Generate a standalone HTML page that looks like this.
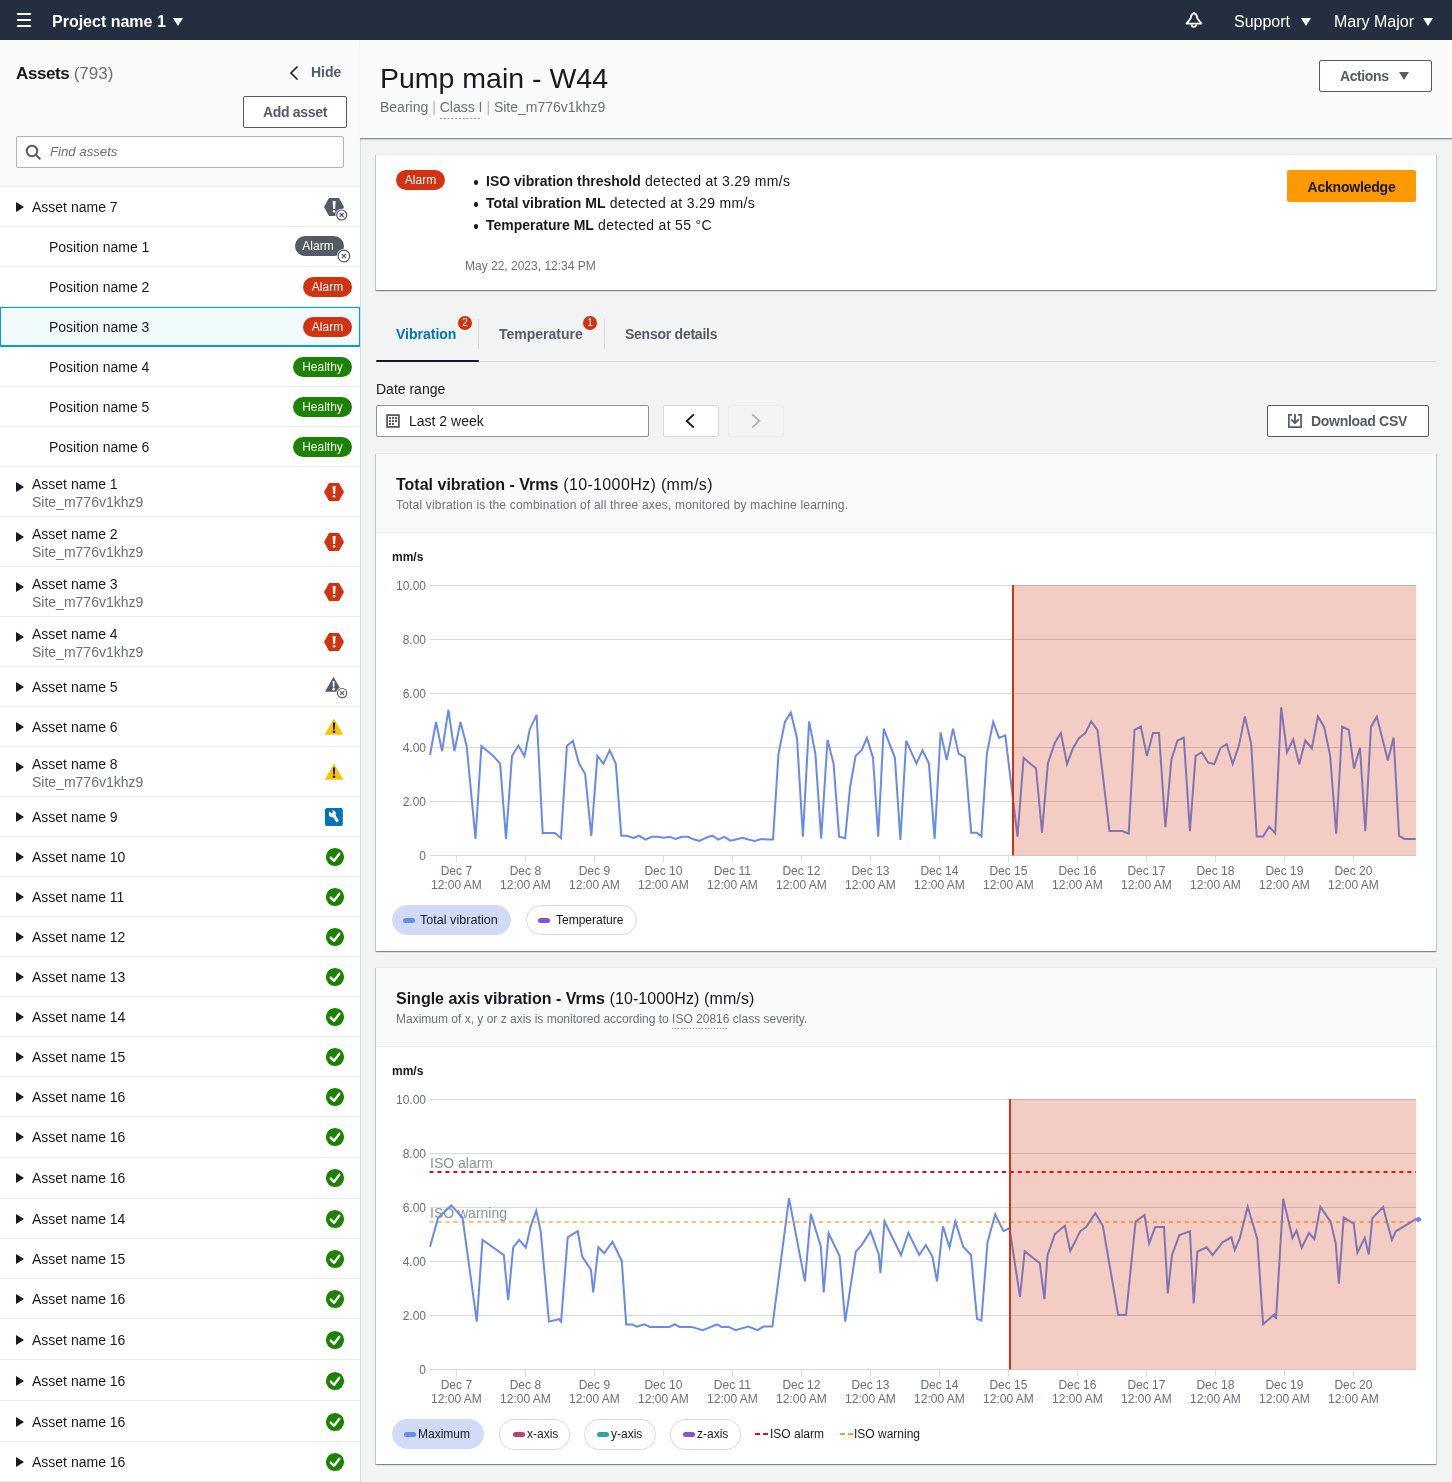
<!DOCTYPE html>
<html><head><meta charset="utf-8"><title>Pump main - W44</title>
<style>
*{box-sizing:border-box}
html,body{margin:0;padding:0}
body{-webkit-font-smoothing:antialiased;will-change:transform;width:1452px;height:1482px;overflow:hidden;position:relative;background:#f2f3f3;font-family:'Liberation Sans',sans-serif;color:#16191f}
.a{position:absolute}
.t{position:absolute;white-space:nowrap;line-height:1}
.nav{left:0;top:0;width:1452px;height:40px;background:#232f3e}
.row{position:absolute;left:0;width:360px;background:#fff;border-bottom:1px solid #eaeded}
.rn{position:absolute;font-size:14px;white-space:nowrap;line-height:1;color:#16191f}
.rs{position:absolute;font-size:14px;white-space:nowrap;line-height:1;color:#687078}
.tri{position:absolute;width:0;height:0;border-top:5px solid transparent;border-bottom:5px solid transparent;border-left:8px solid #16191f}
.badge{position:absolute;height:20px;border-radius:10px;color:#fff;font-size:12px;line-height:20px;text-align:center;white-space:nowrap}
.btn{position:absolute;border:1px solid #545b64;border-radius:2px;background:#fff;color:#545b64;font-weight:bold;font-size:14px;white-space:nowrap}
.card{position:absolute;background:#fff;box-shadow:0 1px 1px 0 rgba(0,28,36,.3),1px 1px 1px 0 rgba(0,28,36,.15),-1px 1px 1px 0 rgba(0,28,36,.15);border-top:1px solid #eaeded}
.gl{position:absolute;white-space:nowrap;line-height:1;font-size:12px;color:#687078}
.pill{position:absolute;height:30px;border-radius:15px;border:1px solid #d5dbdb;background:#fff;font-size:12px;color:#16191f;white-space:nowrap}
.pill.on{background:#d1dbf7;border-color:#d1dbf7}
.sw{position:absolute;height:5px;width:12px;border-radius:3px}
</style></head>
<body>
<div class="a nav"></div>
<div class="a" style="left:17px;top:13.1px;width:14px;height:1.8px;background:#fff"></div>
<div class="a" style="left:17px;top:19.3px;width:14px;height:1.8px;background:#fff"></div>
<div class="a" style="left:17px;top:25.2px;width:14px;height:1.8px;background:#fff"></div>
<div class="t" style="left:52px;top:13.5px;font-size:16px;font-weight:bold;color:#fff">Project name 1</div>
<div class="a" style="left:173px;top:18px;width:0;height:0;border-left:5.0px solid transparent;border-right:5.0px solid transparent;border-top:8px solid #fff"></div>
<svg class="a" style="left:1184px;top:11px" width="20" height="20" viewBox="0 0 20 20"><path d="M2.6 12.6h14.8l-3.6-4.6c-0.7-0.9-0.8-2.2-1.1-3.3a2.8 2.8 0 0 0-5.4 0c-0.3 1.1-0.4 2.4-1.1 3.3z" fill="none" stroke="#fff" stroke-width="1.9" stroke-linejoin="round"/><path d="M10 0.9v1.4" stroke="#fff" stroke-width="1.8"/><path d="M7.6 13.4a2.4 2.4 0 0 0 4.8 0" fill="none" stroke="#fff" stroke-width="1.8"/></svg>
<div class="t" style="left:1234px;top:13.5px;font-size:16px;color:#fff">Support</div>
<div class="a" style="left:1301px;top:17.5px;width:0;height:0;border-left:5.0px solid transparent;border-right:5.0px solid transparent;border-top:8px solid #fff"></div>
<div class="t" style="left:1334px;top:13.5px;font-size:16px;color:#fff">Mary Major</div>
<div class="a" style="left:1423px;top:17.5px;width:0;height:0;border-left:5.0px solid transparent;border-right:5.0px solid transparent;border-top:8px solid #fff"></div>
<div class="a" style="left:0;top:40px;width:361px;height:1442px;background:#fafafa;border-right:1px solid #d5dbdb"></div>
<div class="t" style="left:16px;top:64.5px;font-size:17px;font-weight:bold;letter-spacing:-0.4px">Assets <span style="font-weight:normal;color:#687078;letter-spacing:0">(793)</span></div>
<svg class="a" style="left:288px;top:65px" width="12" height="16" viewBox="0 0 12 16"><path d="M9.5 1.5 3 8l6.5 6.5" fill="none" stroke="#16191f" stroke-width="1.6"/></svg>
<div class="t" style="left:311px;top:65px;font-size:14px;font-weight:bold;color:#545b64">Hide</div>
<div class="btn" style="left:243px;top:96px;width:104px;height:32px;line-height:30px;text-align:center;letter-spacing:-0.3px">Add asset</div>
<div class="a" style="left:16px;top:136px;width:328px;height:32px;background:#fff;border:1px solid #aab7b8;border-radius:2px"></div>
<svg class="a" style="left:25px;top:144px" width="17" height="17" viewBox="0 0 17 17"><circle cx="7" cy="7" r="5.2" fill="none" stroke="#545b64" stroke-width="2"/><path d="M10.8 10.8l4.5 4.5" stroke="#545b64" stroke-width="2"/></svg>
<div class="t" style="left:50px;top:145px;font-size:13.2px;font-style:italic;color:#687078">Find assets</div>
<div class="a" style="left:0;top:186px;width:360px;height:2px;background:#eaeded"></div>
<div class="row" style="top:187px;height:39.5px"></div>
<div class="tri" style="left:16px;top:201.75px"></div>
<div class="rn" style="left:32px;top:199.75px">Asset name 7</div>
<svg class="a" style="left:300px;top:186.75px;overflow:visible" width="60" height="40" viewBox="300 186.75 60 40"><path d="M329 197.75h10l5 9-5 9h-10l-5-9z" fill="#545b64"/><path d="M332.6 200.75h3l-0.5 8h-2z" fill="#fff"/><circle cx="334.1" cy="211.05" r="1.3" fill="#fff"/><circle cx="341.7" cy="214.75" r="6.3" fill="#fff"/><circle cx="341.7" cy="214.75" r="5" fill="#fff" stroke="#545b64" stroke-width="1.2"/><path d="M339.7 212.75l4 4M343.7 212.75l-4 4" stroke="#545b64" stroke-width="1.2"/></svg>
<div class="row" style="top:226.5px;height:40.5px"></div>
<div class="rn" style="left:49px;top:239.75px">Position name 1</div>
<div class="badge" style="left:295px;top:235.75px;width:49px;background:#545b64;padding-right:3px">Alarm</div>
<svg class="a" style="left:334px;top:245.75px;overflow:visible" width="20" height="20" viewBox="334 245.75 20 20"><circle cx="343.9" cy="255.75" r="7.1" fill="#fff"/><circle cx="343.9" cy="255.75" r="5.8" fill="#fff" stroke="#545b64" stroke-width="1.2"/><path d="M341.9 253.75l4 4M345.9 253.75l-4 4" stroke="#545b64" stroke-width="1.2"/></svg>
<div class="row" style="top:267px;height:40px"></div>
<div class="rn" style="left:49px;top:280.0px">Position name 2</div>
<div class="badge" style="left:303px;top:277.0px;width:49px;background:#d13212">Alarm</div>
<div class="row" style="top:307px;height:39.5px"></div>
<div class="a" style="left:0;top:307px;width:360px;height:40px;background:#f1faff;border:1px solid #00a1c9;border-bottom-width:2px"></div>
<div class="rn" style="left:49px;top:319.75px">Position name 3</div>
<div class="badge" style="left:303px;top:316.75px;width:49px;background:#d13212">Alarm</div>
<div class="row" style="top:346.5px;height:40.5px"></div>
<div class="rn" style="left:49px;top:359.75px">Position name 4</div>
<div class="badge" style="left:293px;top:356.75px;width:59px;background:#1d8102">Healthy</div>
<div class="row" style="top:387px;height:40px"></div>
<div class="rn" style="left:49px;top:400.0px">Position name 5</div>
<div class="badge" style="left:293px;top:397.0px;width:59px;background:#1d8102">Healthy</div>
<div class="row" style="top:427px;height:40px"></div>
<div class="rn" style="left:49px;top:440.0px">Position name 6</div>
<div class="badge" style="left:293px;top:437.0px;width:59px;background:#1d8102">Healthy</div>
<div class="row" style="top:467px;height:50px"></div>
<div class="tri" style="left:16px;top:482px"></div>
<div class="rn" style="left:32px;top:477px">Asset name 1</div>
<div class="rs" style="left:32px;top:495px">Site_m776v1khz9</div>
<svg class="a" style="left:300px;top:472.0px;overflow:visible" width="60" height="40" viewBox="300 472.0 60 40"><path d="M329 483.0h10l5 9-5 9h-10l-5-9z" fill="#d13212"/><path d="M332.6 486.0h3l-0.5 8h-2z" fill="#fff"/><circle cx="334.1" cy="496.3" r="1.3" fill="#fff"/></svg>
<div class="row" style="top:517px;height:50px"></div>
<div class="tri" style="left:16px;top:532px"></div>
<div class="rn" style="left:32px;top:527px">Asset name 2</div>
<div class="rs" style="left:32px;top:545px">Site_m776v1khz9</div>
<svg class="a" style="left:300px;top:522.0px;overflow:visible" width="60" height="40" viewBox="300 522.0 60 40"><path d="M329 533.0h10l5 9-5 9h-10l-5-9z" fill="#d13212"/><path d="M332.6 536.0h3l-0.5 8h-2z" fill="#fff"/><circle cx="334.1" cy="546.3" r="1.3" fill="#fff"/></svg>
<div class="row" style="top:567px;height:50px"></div>
<div class="tri" style="left:16px;top:582px"></div>
<div class="rn" style="left:32px;top:577px">Asset name 3</div>
<div class="rs" style="left:32px;top:595px">Site_m776v1khz9</div>
<svg class="a" style="left:300px;top:572.0px;overflow:visible" width="60" height="40" viewBox="300 572.0 60 40"><path d="M329 583.0h10l5 9-5 9h-10l-5-9z" fill="#d13212"/><path d="M332.6 586.0h3l-0.5 8h-2z" fill="#fff"/><circle cx="334.1" cy="596.3" r="1.3" fill="#fff"/></svg>
<div class="row" style="top:617px;height:50px"></div>
<div class="tri" style="left:16px;top:632px"></div>
<div class="rn" style="left:32px;top:627px">Asset name 4</div>
<div class="rs" style="left:32px;top:645px">Site_m776v1khz9</div>
<svg class="a" style="left:300px;top:622.0px;overflow:visible" width="60" height="40" viewBox="300 622.0 60 40"><path d="M329 633.0h10l5 9-5 9h-10l-5-9z" fill="#d13212"/><path d="M332.6 636.0h3l-0.5 8h-2z" fill="#fff"/><circle cx="334.1" cy="646.3" r="1.3" fill="#fff"/></svg>
<div class="row" style="top:667px;height:40px"></div>
<div class="tri" style="left:16px;top:682.0px"></div>
<div class="rn" style="left:32px;top:680.0px">Asset name 5</div>
<svg class="a" style="left:300px;top:667.0px;overflow:visible" width="60" height="40" viewBox="300 667.0 60 40"><path d="M333.5 676.8l8.5 15h-17z" fill="#545b64"/><path d="M332.6 681.0h2l-0.3 6.5h-1.4z" fill="#fff"/><circle cx="333.6" cy="689.3" r="1.3" fill="#fff"/><circle cx="342.1" cy="693.1" r="5.8999999999999995" fill="#fff"/><circle cx="342.1" cy="693.1" r="4.6" fill="#fff" stroke="#545b64" stroke-width="1.2"/><path d="M340.1 691.1l4 4M344.1 691.1l-4 4" stroke="#545b64" stroke-width="1.2"/></svg>
<div class="row" style="top:707px;height:40px"></div>
<div class="tri" style="left:16px;top:722.0px"></div>
<div class="rn" style="left:32px;top:720.0px">Asset name 6</div>
<svg class="a" style="left:300px;top:707.0px;overflow:visible" width="60" height="40" viewBox="300 707.0 60 40"><path d="M334 718.5l9.3 16.2h-18.6z" fill="#fac300"/><path d="M332.9 722.5h2.2l-0.3 7h-1.6z" fill="#0f1b2a"/><circle cx="334" cy="731.8" r="1.3" fill="#0f1b2a"/></svg>
<div class="row" style="top:747px;height:50px"></div>
<div class="tri" style="left:16px;top:762px"></div>
<div class="rn" style="left:32px;top:757px">Asset name 8</div>
<div class="rs" style="left:32px;top:775px">Site_m776v1khz9</div>
<svg class="a" style="left:300px;top:752.0px;overflow:visible" width="60" height="40" viewBox="300 752.0 60 40"><path d="M334 763.5l9.3 16.2h-18.6z" fill="#fac300"/><path d="M332.9 767.5h2.2l-0.3 7h-1.6z" fill="#0f1b2a"/><circle cx="334" cy="776.8" r="1.3" fill="#0f1b2a"/></svg>
<div class="row" style="top:797px;height:40px"></div>
<div class="tri" style="left:16px;top:812.0px"></div>
<div class="rn" style="left:32px;top:810.0px">Asset name 9</div>
<svg class="a" style="left:300px;top:797.0px;overflow:visible" width="60" height="40" viewBox="300 797.0 60 40"><rect x="325" y="808.1" width="17.8" height="17.8" rx="2" fill="#0073bb"/><circle cx="332.3" cy="813.8" r="3.5" fill="#fff"/><path d="M333.8 815.6L337.9 821.6" stroke="#fff" stroke-width="3" stroke-linecap="butt"/><rect x="329.6" y="808.8" width="2.6" height="4.4" transform="rotate(-42 330.9 811.0)" fill="#0073bb"/></svg>
<div class="row" style="top:837px;height:40px"></div>
<div class="tri" style="left:16px;top:852.0px"></div>
<div class="rn" style="left:32px;top:850.0px">Asset name 10</div>
<svg class="a" style="left:300px;top:837.0px;overflow:visible" width="60" height="40" viewBox="300 837.0 60 40"><circle cx="335" cy="857.0" r="9.1" fill="#1d8102"/><path d="M330.8 857.6l3.3 3.2 5.2-7" fill="none" stroke="#fff" stroke-width="2.4" stroke-linecap="round" stroke-linejoin="round"/></svg>
<div class="row" style="top:877px;height:40px"></div>
<div class="tri" style="left:16px;top:892.0px"></div>
<div class="rn" style="left:32px;top:890.0px">Asset name 11</div>
<svg class="a" style="left:300px;top:877.0px;overflow:visible" width="60" height="40" viewBox="300 877.0 60 40"><circle cx="335" cy="897.0" r="9.1" fill="#1d8102"/><path d="M330.8 897.6l3.3 3.2 5.2-7" fill="none" stroke="#fff" stroke-width="2.4" stroke-linecap="round" stroke-linejoin="round"/></svg>
<div class="row" style="top:917px;height:40px"></div>
<div class="tri" style="left:16px;top:932.0px"></div>
<div class="rn" style="left:32px;top:930.0px">Asset name 12</div>
<svg class="a" style="left:300px;top:917.0px;overflow:visible" width="60" height="40" viewBox="300 917.0 60 40"><circle cx="335" cy="937.0" r="9.1" fill="#1d8102"/><path d="M330.8 937.6l3.3 3.2 5.2-7" fill="none" stroke="#fff" stroke-width="2.4" stroke-linecap="round" stroke-linejoin="round"/></svg>
<div class="row" style="top:957px;height:40px"></div>
<div class="tri" style="left:16px;top:972.0px"></div>
<div class="rn" style="left:32px;top:970.0px">Asset name 13</div>
<svg class="a" style="left:300px;top:957.0px;overflow:visible" width="60" height="40" viewBox="300 957.0 60 40"><circle cx="335" cy="977.0" r="9.1" fill="#1d8102"/><path d="M330.8 977.6l3.3 3.2 5.2-7" fill="none" stroke="#fff" stroke-width="2.4" stroke-linecap="round" stroke-linejoin="round"/></svg>
<div class="row" style="top:997px;height:40px"></div>
<div class="tri" style="left:16px;top:1012.0px"></div>
<div class="rn" style="left:32px;top:1010.0px">Asset name 14</div>
<svg class="a" style="left:300px;top:997.0px;overflow:visible" width="60" height="40" viewBox="300 997.0 60 40"><circle cx="335" cy="1017.0" r="9.1" fill="#1d8102"/><path d="M330.8 1017.6l3.3 3.2 5.2-7" fill="none" stroke="#fff" stroke-width="2.4" stroke-linecap="round" stroke-linejoin="round"/></svg>
<div class="row" style="top:1037px;height:40px"></div>
<div class="tri" style="left:16px;top:1052.0px"></div>
<div class="rn" style="left:32px;top:1050.0px">Asset name 15</div>
<svg class="a" style="left:300px;top:1037.0px;overflow:visible" width="60" height="40" viewBox="300 1037.0 60 40"><circle cx="335" cy="1057.0" r="9.1" fill="#1d8102"/><path d="M330.8 1057.6l3.3 3.2 5.2-7" fill="none" stroke="#fff" stroke-width="2.4" stroke-linecap="round" stroke-linejoin="round"/></svg>
<div class="row" style="top:1077px;height:40px"></div>
<div class="tri" style="left:16px;top:1092.0px"></div>
<div class="rn" style="left:32px;top:1090.0px">Asset name 16</div>
<svg class="a" style="left:300px;top:1077.0px;overflow:visible" width="60" height="40" viewBox="300 1077.0 60 40"><circle cx="335" cy="1097.0" r="9.1" fill="#1d8102"/><path d="M330.8 1097.6l3.3 3.2 5.2-7" fill="none" stroke="#fff" stroke-width="2.4" stroke-linecap="round" stroke-linejoin="round"/></svg>
<div class="row" style="top:1117px;height:40.5px"></div>
<div class="tri" style="left:16px;top:1132.25px"></div>
<div class="rn" style="left:32px;top:1130.25px">Asset name 16</div>
<svg class="a" style="left:300px;top:1117.25px;overflow:visible" width="60" height="40" viewBox="300 1117.25 60 40"><circle cx="335" cy="1137.25" r="9.1" fill="#1d8102"/><path d="M330.8 1137.85l3.3 3.2 5.2-7" fill="none" stroke="#fff" stroke-width="2.4" stroke-linecap="round" stroke-linejoin="round"/></svg>
<div class="row" style="top:1157.5px;height:41.0px"></div>
<div class="tri" style="left:16px;top:1173.0px"></div>
<div class="rn" style="left:32px;top:1171.0px">Asset name 16</div>
<svg class="a" style="left:300px;top:1158.0px;overflow:visible" width="60" height="40" viewBox="300 1158.0 60 40"><circle cx="335" cy="1178.0" r="9.1" fill="#1d8102"/><path d="M330.8 1178.6l3.3 3.2 5.2-7" fill="none" stroke="#fff" stroke-width="2.4" stroke-linecap="round" stroke-linejoin="round"/></svg>
<div class="row" style="top:1198.5px;height:40.5px"></div>
<div class="tri" style="left:16px;top:1213.75px"></div>
<div class="rn" style="left:32px;top:1211.75px">Asset name 14</div>
<svg class="a" style="left:300px;top:1198.75px;overflow:visible" width="60" height="40" viewBox="300 1198.75 60 40"><circle cx="335" cy="1218.75" r="9.1" fill="#1d8102"/><path d="M330.8 1219.35l3.3 3.2 5.2-7" fill="none" stroke="#fff" stroke-width="2.4" stroke-linecap="round" stroke-linejoin="round"/></svg>
<div class="row" style="top:1239px;height:40px"></div>
<div class="tri" style="left:16px;top:1254.0px"></div>
<div class="rn" style="left:32px;top:1252.0px">Asset name 15</div>
<svg class="a" style="left:300px;top:1239.0px;overflow:visible" width="60" height="40" viewBox="300 1239.0 60 40"><circle cx="335" cy="1259.0" r="9.1" fill="#1d8102"/><path d="M330.8 1259.6l3.3 3.2 5.2-7" fill="none" stroke="#fff" stroke-width="2.4" stroke-linecap="round" stroke-linejoin="round"/></svg>
<div class="row" style="top:1279px;height:40px"></div>
<div class="tri" style="left:16px;top:1294.0px"></div>
<div class="rn" style="left:32px;top:1292.0px">Asset name 16</div>
<svg class="a" style="left:300px;top:1279.0px;overflow:visible" width="60" height="40" viewBox="300 1279.0 60 40"><circle cx="335" cy="1299.0" r="9.1" fill="#1d8102"/><path d="M330.8 1299.6l3.3 3.2 5.2-7" fill="none" stroke="#fff" stroke-width="2.4" stroke-linecap="round" stroke-linejoin="round"/></svg>
<div class="row" style="top:1319px;height:41px"></div>
<div class="tri" style="left:16px;top:1334.5px"></div>
<div class="rn" style="left:32px;top:1332.5px">Asset name 16</div>
<svg class="a" style="left:300px;top:1319.5px;overflow:visible" width="60" height="40" viewBox="300 1319.5 60 40"><circle cx="335" cy="1339.5" r="9.1" fill="#1d8102"/><path d="M330.8 1340.1l3.3 3.2 5.2-7" fill="none" stroke="#fff" stroke-width="2.4" stroke-linecap="round" stroke-linejoin="round"/></svg>
<div class="row" style="top:1360px;height:41px"></div>
<div class="tri" style="left:16px;top:1375.5px"></div>
<div class="rn" style="left:32px;top:1373.5px">Asset name 16</div>
<svg class="a" style="left:300px;top:1360.5px;overflow:visible" width="60" height="40" viewBox="300 1360.5 60 40"><circle cx="335" cy="1380.5" r="9.1" fill="#1d8102"/><path d="M330.8 1381.1l3.3 3.2 5.2-7" fill="none" stroke="#fff" stroke-width="2.4" stroke-linecap="round" stroke-linejoin="round"/></svg>
<div class="row" style="top:1401px;height:41px"></div>
<div class="tri" style="left:16px;top:1416.5px"></div>
<div class="rn" style="left:32px;top:1414.5px">Asset name 16</div>
<svg class="a" style="left:300px;top:1401.5px;overflow:visible" width="60" height="40" viewBox="300 1401.5 60 40"><circle cx="335" cy="1421.5" r="9.1" fill="#1d8102"/><path d="M330.8 1422.1l3.3 3.2 5.2-7" fill="none" stroke="#fff" stroke-width="2.4" stroke-linecap="round" stroke-linejoin="round"/></svg>
<div class="row" style="top:1442px;height:40px"></div>
<div class="tri" style="left:16px;top:1457.0px"></div>
<div class="rn" style="left:32px;top:1455.0px">Asset name 16</div>
<svg class="a" style="left:300px;top:1442.0px;overflow:visible" width="60" height="40" viewBox="300 1442.0 60 40"><circle cx="335" cy="1462.0" r="9.1" fill="#1d8102"/><path d="M330.8 1462.6l3.3 3.2 5.2-7" fill="none" stroke="#fff" stroke-width="2.4" stroke-linecap="round" stroke-linejoin="round"/></svg>
<div class="a" style="left:360px;top:40px;width:1092px;height:99px;background:#fafafa;border-bottom:1px solid #879596;box-shadow:0 1px 1px rgba(0,28,36,.15)"></div>
<div class="t" style="left:380px;top:64px;font-size:28.5px;color:#16191f">Pump main - W44</div>
<div class="t" style="left:380px;top:100px;font-size:14px;color:#687078">Bearing <span style="color:#aab7b8">|</span> <span style="padding-bottom:4px;background:linear-gradient(to right,#879596 2px,transparent 2px) 0 100%/3.8px 1.5px repeat-x">Class I</span> <span style="color:#aab7b8">|</span> Site_m776v1khz9</div>
<div class="btn" style="left:1319px;top:60px;width:113px;height:32px;line-height:30px;padding-left:20px;letter-spacing:-0.4px">Actions</div>
<div class="a" style="left:1399px;top:72px;width:0;height:0;border-left:5.0px solid transparent;border-right:5.0px solid transparent;border-top:8px solid #545b64"></div>
<div class="card" style="left:376px;top:154px;width:1060px;height:136px"></div>
<div class="badge" style="left:396px;top:170px;width:49px;background:#d13212">Alarm</div>
<div class="a" style="left:473.5px;top:180px;width:4.5px;height:4.5px;border-radius:2.25px;background:#16191f"></div>
<div class="t" style="left:486px;top:174px;font-size:14px"><b>ISO vibration threshold</b><span style="letter-spacing:0.32px"> detected at 3.29 mm/s</span></div>
<div class="a" style="left:473.5px;top:202px;width:4.5px;height:4.5px;border-radius:2.25px;background:#16191f"></div>
<div class="t" style="left:486px;top:196px;font-size:14px"><b>Total vibration ML</b><span style="letter-spacing:0.32px"> detected at 3.29 mm/s</span></div>
<div class="a" style="left:473.5px;top:224px;width:4.5px;height:4.5px;border-radius:2.25px;background:#16191f"></div>
<div class="t" style="left:486px;top:218px;font-size:14px"><b>Temperature ML</b><span style="letter-spacing:0.32px"> detected at 55 °C</span></div>
<div class="t" style="left:465px;top:260px;font-size:12px;color:#687078">May 22, 2023, 12:34 PM</div>
<div class="a" style="left:1287px;top:170px;width:129px;height:32px;background:#ff9900;border-radius:2px;color:#16191f;font-weight:bold;font-size:14px;line-height:34px;text-align:center;letter-spacing:-0.2px">Acknowledge</div>
<div class="a" style="left:376px;top:361px;width:1060px;height:1px;background:#d5dbdb"></div>
<div class="a" style="left:376px;top:360px;width:103px;height:2px;border-radius:1px;background:#16191f"></div>
<div class="t" style="left:396px;top:327px;font-size:14px;font-weight:bold;color:#0073bb">Vibration</div>
<div class="a" style="left:458px;top:315.5px;width:14px;height:14px;border-radius:7px;background:#d13212;color:#fff;font-size:10px;line-height:14px;text-align:center">2</div>
<div class="a" style="left:478px;top:319px;width:1px;height:30px;background:#d5dbdb"></div>
<div class="t" style="left:499px;top:327px;font-size:14px;font-weight:bold;color:#545b64">Temperature</div>
<div class="a" style="left:583px;top:315.5px;width:14px;height:14px;border-radius:7px;background:#d13212;color:#fff;font-size:10px;line-height:14px;text-align:center">1</div>
<div class="a" style="left:604px;top:319px;width:1px;height:30px;background:#d5dbdb"></div>
<div class="t" style="left:625px;top:327px;font-size:14px;font-weight:bold;color:#545b64;letter-spacing:-0.25px">Sensor details</div>
<div class="t" style="left:376px;top:382px;font-size:14px">Date range</div>
<div class="a" style="left:376px;top:405px;width:273px;height:32px;background:#fff;border:1px solid #879596;border-radius:2px"></div>
<svg class="a" style="left:385px;top:413px" width="16" height="16" viewBox="0 0 16 16"><rect x="2.1" y="2.1" width="11.8" height="11.8" fill="none" stroke="#545b64" stroke-width="1.8"/><g fill="#545b64"><rect x="4" y="4" width="2" height="2"/><rect x="7" y="4" width="2" height="2"/><rect x="10" y="4" width="2" height="2"/><rect x="4" y="7" width="2" height="2"/><rect x="7" y="7" width="2" height="2"/><rect x="10" y="7" width="2" height="2"/><rect x="4" y="10" width="2" height="2"/><rect x="7" y="10" width="2" height="2"/></g></svg>
<div class="t" style="left:409px;top:414px;font-size:14px">Last 2 week</div>
<div class="a" style="left:663px;top:405px;width:56px;height:32px;background:#fff;border:1px solid #d5dbdb;border-radius:2px"></div>
<svg class="a" style="left:682px;top:412px" width="16" height="18" viewBox="0 0 16 18"><path d="M11.8 2.5 4.6 9 11.8 15.5" fill="none" stroke="#16191f" stroke-width="1.7"/></svg>
<div class="a" style="left:728px;top:405px;width:56px;height:32px;background:#f2f3f3;border:1px solid #eaeded;border-radius:2px"></div>
<svg class="a" style="left:748px;top:412px" width="16" height="18" viewBox="0 0 16 18"><path d="M4.2 2.5 11.6 9 4.2 15.5" fill="none" stroke="#b4b4b4" stroke-width="1.7"/></svg>
<div class="btn" style="left:1267px;top:405px;width:162px;height:32px;line-height:30px;padding-left:43px;letter-spacing:-0.3px">Download CSV</div>
<svg class="a" style="left:1287px;top:413px" width="16" height="16" viewBox="0 0 16 16"><path d="M4.9 1.95H1.85V14.05H14.05V1.95H11.1" fill="none" stroke="#545b64" stroke-width="1.7" stroke-linejoin="miter"/><path d="M7.95 1.1V10M4.2 6.4 7.95 10.2 11.7 6.4" fill="none" stroke="#545b64" stroke-width="1.9"/></svg>
<div class="card" style="left:376px;top:453px;width:1060px;height:498px"></div>
<div class="a" style="left:376px;top:454px;width:1060px;height:79px;background:#fafafa;border-bottom:1px solid #eaeded"></div>
<div class="t" style="left:396px;top:476.5px;font-size:16px"><b>Total vibration - Vrms</b><span style="letter-spacing:0.36px"> (10-1000Hz) (mm/s)</span></div>
<div class="t" style="left:396px;top:499px;font-size:12px;color:#687078;letter-spacing:0.19px">Total vibration is the combination of all three axes, monitored by machine learning.</div>
<div class="t" style="left:392px;top:550.5px;font-size:12px;font-weight:bold">mm/s</div>
<svg class="a" style="left:376px;top:453px" width="1060" height="498" viewBox="376 453 1060 498"><line x1="430" y1="855.5" x2="1416" y2="855.5" stroke="#d5dbdb" stroke-width="1"/><line x1="430" y1="801.5" x2="1416" y2="801.5" stroke="#d5dbdb" stroke-width="1"/><line x1="430" y1="747.5" x2="1416" y2="747.5" stroke="#d5dbdb" stroke-width="1"/><line x1="430" y1="693.5" x2="1416" y2="693.5" stroke="#d5dbdb" stroke-width="1"/><line x1="430" y1="639.5" x2="1416" y2="639.5" stroke="#d5dbdb" stroke-width="1"/><line x1="430" y1="585.5" x2="1416" y2="585.5" stroke="#d5dbdb" stroke-width="1"/><line x1="456.4" y1="855.5" x2="456.4" y2="862.5" stroke="#d5dbdb" stroke-width="1"/><line x1="525.4" y1="855.5" x2="525.4" y2="862.5" stroke="#d5dbdb" stroke-width="1"/><line x1="594.4" y1="855.5" x2="594.4" y2="862.5" stroke="#d5dbdb" stroke-width="1"/><line x1="663.4" y1="855.5" x2="663.4" y2="862.5" stroke="#d5dbdb" stroke-width="1"/><line x1="732.4" y1="855.5" x2="732.4" y2="862.5" stroke="#d5dbdb" stroke-width="1"/><line x1="801.4" y1="855.5" x2="801.4" y2="862.5" stroke="#d5dbdb" stroke-width="1"/><line x1="870.4" y1="855.5" x2="870.4" y2="862.5" stroke="#d5dbdb" stroke-width="1"/><line x1="939.4" y1="855.5" x2="939.4" y2="862.5" stroke="#d5dbdb" stroke-width="1"/><line x1="1008.4" y1="855.5" x2="1008.4" y2="862.5" stroke="#d5dbdb" stroke-width="1"/><line x1="1077.4" y1="855.5" x2="1077.4" y2="862.5" stroke="#d5dbdb" stroke-width="1"/><line x1="1146.4" y1="855.5" x2="1146.4" y2="862.5" stroke="#d5dbdb" stroke-width="1"/><line x1="1215.4" y1="855.5" x2="1215.4" y2="862.5" stroke="#d5dbdb" stroke-width="1"/><line x1="1284.4" y1="855.5" x2="1284.4" y2="862.5" stroke="#d5dbdb" stroke-width="1"/><line x1="1353.4" y1="855.5" x2="1353.4" y2="862.5" stroke="#d5dbdb" stroke-width="1"/><polyline points="430.0,755.0 436.0,722.0 442.1,751.2 448.4,709.8 454.4,751.2 460.5,722.0 466.7,746.2 475.5,838.8 481.4,746.0 493.3,755.9 500.1,763.6 506.0,838.8 512.0,756.0 518.4,745.6 524.5,756.1 529.7,729.7 536.6,714.8 542.7,833.0 555.0,833.0 561.0,838.2 566.9,746.0 572.9,740.7 578.9,763.3 585.1,773.7 591.3,836.0 597.4,755.9 603.4,763.6 609.7,750.4 615.8,763.8 621.3,835.7 626.8,835.7 633.2,837.9 639.1,835.7 645.3,839.6 651.6,836.8 658.2,836.8 663.7,837.7 669.2,836.8 675.8,839.0 681.9,836.8 688.0,836.8 693.5,839.3 699.5,841.0 706.1,837.7 712.2,835.7 718.3,839.6 724.3,836.8 730.4,840.7 736.6,839.3 742.7,837.7 748.7,839.6 754.8,841.0 761.4,839.0 766.9,839.6 773.0,839.6 778.5,753.9 784.9,722.0 790.8,712.6 797.0,737.9 802.9,836.6 809.1,721.4 815.4,753.9 821.2,838.8 827.5,740.1 833.6,763.8 839.1,836.6 845.2,838.2 850.1,787.0 855.6,755.9 861.7,750.1 866.9,737.9 873.0,757.8 878.2,836.6 883.7,728.6 894.9,757.8 900.4,839.9 906.2,740.7 916.4,763.6 922.5,750.4 928.9,763.6 934.6,838.8 940.6,732.4 946.7,760.0 953.0,728.6 958.6,753.7 964.9,757.4 971.2,832.7 977.0,832.7 981.4,836.6 986.9,753.4 993.2,722.0 999.0,737.9 1005.3,735.4 1017.5,836.6 1023.6,757.8 1029.9,763.6 1036.0,768.2 1042.0,832.7 1047.9,763.3 1054.9,742.7 1060.9,733.0 1067.0,764.0 1073.1,747.9 1079.1,737.9 1085.4,733.0 1091.2,721.4 1097.5,730.2 1109.4,831.0 1122.1,831.0 1128.7,833.5 1134.5,729.9 1140.8,726.6 1146.9,755.9 1153.0,733.0 1159.0,733.0 1165.4,827.2 1171.4,759.4 1177.5,740.5 1183.8,737.6 1189.9,831.3 1195.6,755.9 1201.8,752.3 1208.2,762.7 1214.3,764.0 1220.6,747.9 1226.7,744.2 1232.7,764.0 1238.9,745.6 1244.9,716.4 1251.2,744.0 1256.7,836.6 1263.1,836.6 1269.2,826.6 1275.2,833.3 1281.2,707.4 1287.0,752.3 1293.2,739.5 1299.2,764.2 1305.3,740.5 1311.8,748.4 1317.9,716.4 1324.1,726.9 1330.1,755.5 1336.2,833.6 1342.2,726.5 1348.8,730.0 1354.0,768.4 1360.0,747.9 1365.3,831.3 1371.0,726.9 1376.8,716.7 1387.9,760.5 1393.6,737.6 1399.1,836.0 1404.6,839.0 1415.8,839.0" fill="none" stroke="#688ae8" stroke-width="2" stroke-linejoin="miter"/><rect x="1014" y="585.0" width="402" height="270.5" fill="rgba(209,50,18,0.25)"/><line x1="1013" y1="585.0" x2="1013" y2="855.5" stroke="#d13212" stroke-width="2"/></svg>
<div class="gl" style="right:1026px;top:850.0px">0</div>
<div class="gl" style="right:1026px;top:796.0px">2.00</div>
<div class="gl" style="right:1026px;top:742.0px">4.00</div>
<div class="gl" style="right:1026px;top:688.0px">6.00</div>
<div class="gl" style="right:1026px;top:634.0px">8.00</div>
<div class="gl" style="right:1026px;top:580.0px">10.00</div>
<div class="gl" style="left:416.4px;width:80px;text-align:center;top:865.0px">Dec 7</div>
<div class="gl" style="left:416.4px;width:80px;text-align:center;top:879.0px">12:00 AM</div>
<div class="gl" style="left:485.4px;width:80px;text-align:center;top:865.0px">Dec 8</div>
<div class="gl" style="left:485.4px;width:80px;text-align:center;top:879.0px">12:00 AM</div>
<div class="gl" style="left:554.4px;width:80px;text-align:center;top:865.0px">Dec 9</div>
<div class="gl" style="left:554.4px;width:80px;text-align:center;top:879.0px">12:00 AM</div>
<div class="gl" style="left:623.4px;width:80px;text-align:center;top:865.0px">Dec 10</div>
<div class="gl" style="left:623.4px;width:80px;text-align:center;top:879.0px">12:00 AM</div>
<div class="gl" style="left:692.4px;width:80px;text-align:center;top:865.0px">Dec 11</div>
<div class="gl" style="left:692.4px;width:80px;text-align:center;top:879.0px">12:00 AM</div>
<div class="gl" style="left:761.4px;width:80px;text-align:center;top:865.0px">Dec 12</div>
<div class="gl" style="left:761.4px;width:80px;text-align:center;top:879.0px">12:00 AM</div>
<div class="gl" style="left:830.4px;width:80px;text-align:center;top:865.0px">Dec 13</div>
<div class="gl" style="left:830.4px;width:80px;text-align:center;top:879.0px">12:00 AM</div>
<div class="gl" style="left:899.4px;width:80px;text-align:center;top:865.0px">Dec 14</div>
<div class="gl" style="left:899.4px;width:80px;text-align:center;top:879.0px">12:00 AM</div>
<div class="gl" style="left:968.4px;width:80px;text-align:center;top:865.0px">Dec 15</div>
<div class="gl" style="left:968.4px;width:80px;text-align:center;top:879.0px">12:00 AM</div>
<div class="gl" style="left:1037.4px;width:80px;text-align:center;top:865.0px">Dec 16</div>
<div class="gl" style="left:1037.4px;width:80px;text-align:center;top:879.0px">12:00 AM</div>
<div class="gl" style="left:1106.4px;width:80px;text-align:center;top:865.0px">Dec 17</div>
<div class="gl" style="left:1106.4px;width:80px;text-align:center;top:879.0px">12:00 AM</div>
<div class="gl" style="left:1175.4px;width:80px;text-align:center;top:865.0px">Dec 18</div>
<div class="gl" style="left:1175.4px;width:80px;text-align:center;top:879.0px">12:00 AM</div>
<div class="gl" style="left:1244.4px;width:80px;text-align:center;top:865.0px">Dec 19</div>
<div class="gl" style="left:1244.4px;width:80px;text-align:center;top:879.0px">12:00 AM</div>
<div class="gl" style="left:1313.4px;width:80px;text-align:center;top:865.0px">Dec 20</div>
<div class="gl" style="left:1313.4px;width:80px;text-align:center;top:879.0px">12:00 AM</div>
<div class="pill on" style="left:392px;top:905px;width:119px"></div><div class="sw" style="left:403px;top:918px;background:#688ae8"></div><div class="t" style="left:420px;top:914px;font-size:12.6px">Total vibration</div><div class="pill" style="left:526px;top:905px;width:111px"></div><div class="sw" style="left:538px;top:918px;background:#8456ce"></div><div class="t" style="left:556px;top:914px;font-size:12px">Temperature</div>
<div class="card" style="left:376px;top:967px;width:1060px;height:497px"></div>
<div class="a" style="left:376px;top:968px;width:1060px;height:79px;background:#fafafa;border-bottom:1px solid #eaeded"></div>
<div class="t" style="left:396px;top:990.5px;font-size:16px"><b>Single axis vibration - Vrms</b><span style="letter-spacing:0.1px"> (10-1000Hz) (mm/s)</span></div>
<div class="t" style="left:396px;top:1013px;font-size:12px;color:#687078;letter-spacing:0px">Maximum of x, y or z axis is monitored according to <span style="padding-bottom:3px;background:linear-gradient(to right,#879596 1.5px,transparent 1.5px) 0 100%/3px 1px repeat-x">ISO 20816</span> class severity.</div>
<div class="t" style="left:392px;top:1064.5px;font-size:12px;font-weight:bold">mm/s</div>
<svg class="a" style="left:376px;top:967px" width="1060" height="497" viewBox="376 967 1060 497"><line x1="430" y1="1369.5" x2="1416" y2="1369.5" stroke="#d5dbdb" stroke-width="1"/><line x1="430" y1="1315.5" x2="1416" y2="1315.5" stroke="#d5dbdb" stroke-width="1"/><line x1="430" y1="1261.5" x2="1416" y2="1261.5" stroke="#d5dbdb" stroke-width="1"/><line x1="430" y1="1207.5" x2="1416" y2="1207.5" stroke="#d5dbdb" stroke-width="1"/><line x1="430" y1="1153.5" x2="1416" y2="1153.5" stroke="#d5dbdb" stroke-width="1"/><line x1="430" y1="1099.5" x2="1416" y2="1099.5" stroke="#d5dbdb" stroke-width="1"/><line x1="456.4" y1="1369.5" x2="456.4" y2="1376.5" stroke="#d5dbdb" stroke-width="1"/><line x1="525.4" y1="1369.5" x2="525.4" y2="1376.5" stroke="#d5dbdb" stroke-width="1"/><line x1="594.4" y1="1369.5" x2="594.4" y2="1376.5" stroke="#d5dbdb" stroke-width="1"/><line x1="663.4" y1="1369.5" x2="663.4" y2="1376.5" stroke="#d5dbdb" stroke-width="1"/><line x1="732.4" y1="1369.5" x2="732.4" y2="1376.5" stroke="#d5dbdb" stroke-width="1"/><line x1="801.4" y1="1369.5" x2="801.4" y2="1376.5" stroke="#d5dbdb" stroke-width="1"/><line x1="870.4" y1="1369.5" x2="870.4" y2="1376.5" stroke="#d5dbdb" stroke-width="1"/><line x1="939.4" y1="1369.5" x2="939.4" y2="1376.5" stroke="#d5dbdb" stroke-width="1"/><line x1="1008.4" y1="1369.5" x2="1008.4" y2="1376.5" stroke="#d5dbdb" stroke-width="1"/><line x1="1077.4" y1="1369.5" x2="1077.4" y2="1376.5" stroke="#d5dbdb" stroke-width="1"/><line x1="1146.4" y1="1369.5" x2="1146.4" y2="1376.5" stroke="#d5dbdb" stroke-width="1"/><line x1="1215.4" y1="1369.5" x2="1215.4" y2="1376.5" stroke="#d5dbdb" stroke-width="1"/><line x1="1284.4" y1="1369.5" x2="1284.4" y2="1376.5" stroke="#d5dbdb" stroke-width="1"/><line x1="1353.4" y1="1369.5" x2="1353.4" y2="1376.5" stroke="#d5dbdb" stroke-width="1"/><text x="430" y="1167.7" font-family="Liberation Sans" font-size="14" fill="#879596">ISO alarm</text><text x="430" y="1217.8" font-family="Liberation Sans" font-size="14" fill="#879596">ISO warning</text><line x1="429.5" y1="1172" x2="1416" y2="1172" stroke="#d40f0f" stroke-width="2" stroke-dasharray="4 3.95"/><line x1="429.5" y1="1222" x2="1416" y2="1222" stroke="#fbbf66" stroke-width="2" stroke-dasharray="4 3.95"/><polyline points="430.0,1246.7 438.2,1217.5 451.2,1205.4 462.5,1217.5 476.8,1321.6 482.5,1239.9 503.8,1255.0 508.2,1300.2 513.2,1247.3 519.2,1239.9 525.8,1247.6 530.8,1225.8 536.3,1210.9 540.7,1231.3 549.0,1321.6 558.9,1319.2 561.1,1321.6 567.7,1237.3 577.7,1231.2 582.2,1256.6 591.0,1269.8 593.2,1292.4 598.4,1247.3 604.2,1253.3 612.5,1241.7 621.8,1261.0 626.2,1324.4 632.3,1324.4 636.7,1326.6 644.4,1324.4 649.9,1326.9 669.2,1326.9 674.7,1324.4 679.7,1326.9 691.3,1326.9 702.8,1330.2 717.1,1324.4 721.6,1326.9 728.7,1326.9 735.5,1330.2 748.2,1326.6 757.5,1330.2 763.6,1326.6 772.4,1326.6 789.0,1198.2 804.9,1281.4 810.8,1213.9 820.9,1246.7 823.7,1292.4 828.6,1233.3 839.6,1256.1 845.2,1321.6 855.8,1251.7 861.7,1245.1 870.5,1231.1 878.8,1254.4 880.4,1273.2 884.5,1221.4 901.0,1255.0 908.4,1232.9 919.2,1255.0 925.8,1245.1 932.4,1256.6 937.0,1281.4 942.9,1226.3 949.5,1247.3 955.3,1221.4 963.2,1246.7 971.0,1255.0 977.0,1318.9 981.4,1320.5 987.5,1242.3 995.2,1214.2 1003.5,1231.1 1009.5,1228.0 1020.0,1296.8 1024.7,1251.1 1039.8,1263.2 1044.4,1299.0 1047.5,1255.5 1054.9,1234.0 1064.8,1225.8 1070.3,1251.1 1080.2,1231.3 1086.3,1226.9 1095.3,1213.1 1102.8,1225.8 1118.2,1315.0 1126.0,1315.0 1135.6,1221.6 1144.5,1215.0 1149.1,1243.4 1155.2,1227.1 1164.0,1227.1 1167.8,1293.5 1172.0,1255.0 1179.4,1235.1 1189.9,1231.3 1193.7,1303.5 1197.4,1251.7 1206.6,1247.3 1212.6,1255.0 1222.5,1242.3 1231.4,1237.3 1234.7,1250.0 1239.6,1239.0 1247.7,1206.5 1257.3,1239.0 1263.1,1324.1 1274.3,1314.5 1276.0,1318.9 1283.2,1198.8 1292.5,1237.9 1296.5,1230.5 1301.7,1247.8 1309.0,1233.1 1314.4,1239.0 1320.4,1206.9 1330.6,1221.6 1335.7,1243.4 1338.9,1283.6 1343.7,1217.5 1353.7,1223.7 1357.4,1252.8 1364.7,1237.9 1368.8,1254.4 1372.4,1218.1 1383.1,1207.0 1391.9,1240.1 1395.8,1231.3 1416.7,1218.6" fill="none" stroke="#688ae8" stroke-width="2" stroke-linejoin="miter"/><rect x="1011" y="1099.0" width="405" height="270.5" fill="rgba(209,50,18,0.25)"/><line x1="1010" y1="1099.0" x2="1010" y2="1369.5" stroke="#d13212" stroke-width="2"/></svg>
<div class="gl" style="right:1026px;top:1364.0px">0</div>
<div class="gl" style="right:1026px;top:1310.0px">2.00</div>
<div class="gl" style="right:1026px;top:1256.0px">4.00</div>
<div class="gl" style="right:1026px;top:1202.0px">6.00</div>
<div class="gl" style="right:1026px;top:1148.0px">8.00</div>
<div class="gl" style="right:1026px;top:1094.0px">10.00</div>
<div class="gl" style="left:416.4px;width:80px;text-align:center;top:1379.0px">Dec 7</div>
<div class="gl" style="left:416.4px;width:80px;text-align:center;top:1393.0px">12:00 AM</div>
<div class="gl" style="left:485.4px;width:80px;text-align:center;top:1379.0px">Dec 8</div>
<div class="gl" style="left:485.4px;width:80px;text-align:center;top:1393.0px">12:00 AM</div>
<div class="gl" style="left:554.4px;width:80px;text-align:center;top:1379.0px">Dec 9</div>
<div class="gl" style="left:554.4px;width:80px;text-align:center;top:1393.0px">12:00 AM</div>
<div class="gl" style="left:623.4px;width:80px;text-align:center;top:1379.0px">Dec 10</div>
<div class="gl" style="left:623.4px;width:80px;text-align:center;top:1393.0px">12:00 AM</div>
<div class="gl" style="left:692.4px;width:80px;text-align:center;top:1379.0px">Dec 11</div>
<div class="gl" style="left:692.4px;width:80px;text-align:center;top:1393.0px">12:00 AM</div>
<div class="gl" style="left:761.4px;width:80px;text-align:center;top:1379.0px">Dec 12</div>
<div class="gl" style="left:761.4px;width:80px;text-align:center;top:1393.0px">12:00 AM</div>
<div class="gl" style="left:830.4px;width:80px;text-align:center;top:1379.0px">Dec 13</div>
<div class="gl" style="left:830.4px;width:80px;text-align:center;top:1393.0px">12:00 AM</div>
<div class="gl" style="left:899.4px;width:80px;text-align:center;top:1379.0px">Dec 14</div>
<div class="gl" style="left:899.4px;width:80px;text-align:center;top:1393.0px">12:00 AM</div>
<div class="gl" style="left:968.4px;width:80px;text-align:center;top:1379.0px">Dec 15</div>
<div class="gl" style="left:968.4px;width:80px;text-align:center;top:1393.0px">12:00 AM</div>
<div class="gl" style="left:1037.4px;width:80px;text-align:center;top:1379.0px">Dec 16</div>
<div class="gl" style="left:1037.4px;width:80px;text-align:center;top:1393.0px">12:00 AM</div>
<div class="gl" style="left:1106.4px;width:80px;text-align:center;top:1379.0px">Dec 17</div>
<div class="gl" style="left:1106.4px;width:80px;text-align:center;top:1393.0px">12:00 AM</div>
<div class="gl" style="left:1175.4px;width:80px;text-align:center;top:1379.0px">Dec 18</div>
<div class="gl" style="left:1175.4px;width:80px;text-align:center;top:1393.0px">12:00 AM</div>
<div class="gl" style="left:1244.4px;width:80px;text-align:center;top:1379.0px">Dec 19</div>
<div class="gl" style="left:1244.4px;width:80px;text-align:center;top:1393.0px">12:00 AM</div>
<div class="gl" style="left:1313.4px;width:80px;text-align:center;top:1379.0px">Dec 20</div>
<div class="gl" style="left:1313.4px;width:80px;text-align:center;top:1393.0px">12:00 AM</div>
<div class="pill on" style="left:392px;top:1419px;width:92px"></div><div class="sw" style="left:404px;top:1432px;background:#688ae8"></div><div class="t" style="left:418px;top:1428px;font-size:12px">Maximum</div><div class="pill" style="left:499px;top:1418.5px;width:71px;height:31px"></div><div class="sw" style="left:513px;top:1432px;background:#c33d69"></div><div class="t" style="left:527px;top:1428px;font-size:12px">x-axis</div><div class="pill" style="left:584px;top:1418.5px;width:72px;height:31px"></div><div class="sw" style="left:597px;top:1432px;background:#2ea597"></div><div class="t" style="left:611px;top:1428px;font-size:12px">y-axis</div><div class="pill" style="left:670px;top:1418.5px;width:71px;height:31px"></div><div class="sw" style="left:683px;top:1432px;background:#8456ce"></div><div class="t" style="left:697px;top:1428px;font-size:12px">z-axis</div><div class="a" style="left:755px;top:1433px;width:5px;height:2px;background:#d91515"></div><div class="a" style="left:763px;top:1433px;width:5px;height:2px;background:#d91515"></div><div class="t" style="left:770px;top:1428px;font-size:12px">ISO alarm</div><div class="a" style="left:840px;top:1433px;width:5px;height:2px;background:#f89c24"></div><div class="a" style="left:848px;top:1433px;width:5px;height:2px;background:#f89c24"></div><div class="t" style="left:854px;top:1428px;font-size:12px">ISO warning</div>
<div class="a" style="left:1416px;top:1216.6px;width:5px;height:5px;border-radius:3px;background:#688ae8"></div>
</body></html>
